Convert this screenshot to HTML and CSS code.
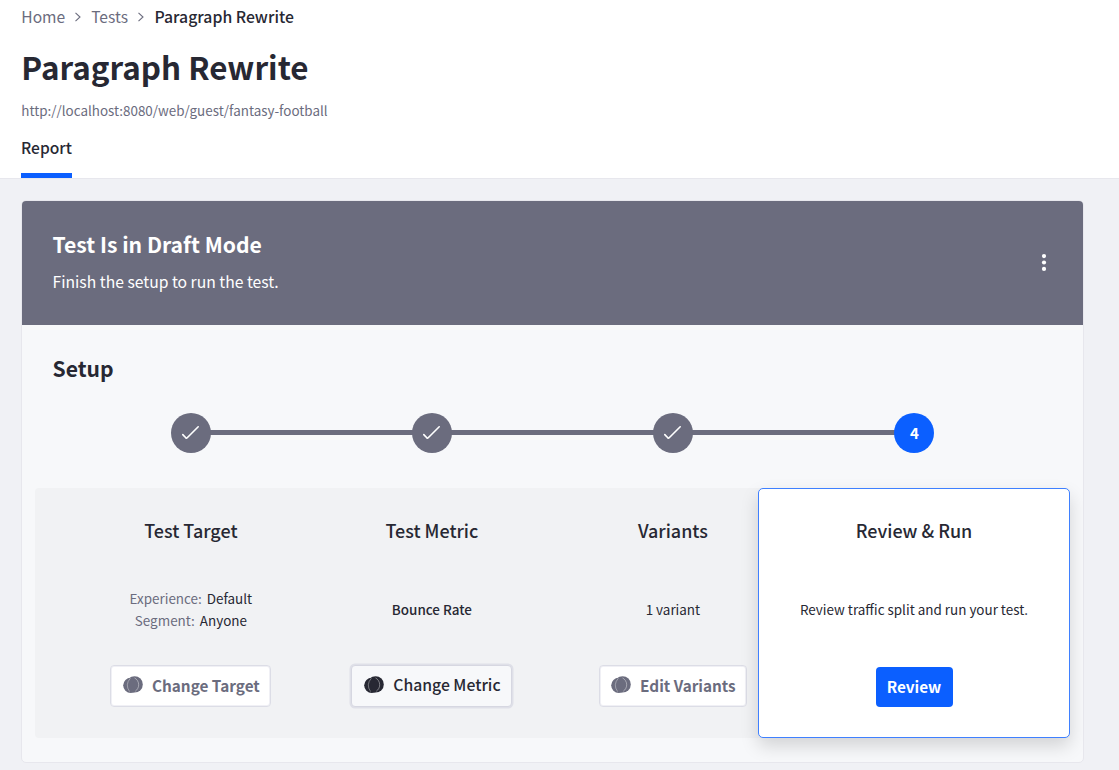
FILE: index.html
```html
<!DOCTYPE html>
<html lang="en">
<head>
<meta charset="utf-8">
<title>Paragraph Rewrite</title>
<link rel="stylesheet" href="styles.css">
</head>
<body>
<svg class="defs" width="0" height="0">
  <symbol id="check" viewBox="0 0 20 16"><path d="M1.8 9.6 4.8 12.8Q5.5 13.4 6.2 12.7L17.2 1.8" fill="none" stroke="#fff" stroke-width="1.6" stroke-linecap="round" stroke-linejoin="round"/></symbol>
  <symbol id="discs" viewBox="0 0 20 18">
    <circle cx="7.8" cy="9.3" r="7.6" fill="currentColor"/>
    <circle cx="11.6" cy="8.4" r="8.2" fill="currentColor"/>
    <path d="M7.4 2.2Q1.6 8.6 6.6 15.6" fill="none" stroke="#fff" stroke-opacity=".5" stroke-width=".7"/>
    <path d="M11.5 1.9A7.8 7.8 0 0 1 12.2 15.3" fill="none" stroke="#fff" stroke-opacity=".5" stroke-width=".8"/>
  </symbol>
  <symbol id="chevron" viewBox="0 0 8 12"><path d="M1.5 1.8 6 6 1.5 10.2" fill="none" stroke="#6b6c7e" stroke-width="1.1"/></symbol>
</svg>
<header class="header">
  <nav class="crumbs">
    <a class="crumb crumb-home">Home</a><svg class="chevron"><use href="#chevron"/></svg><a class="crumb crumb-tests">Tests</a><svg class="chevron"><use href="#chevron"/></svg><span class="crumb crumb-current">Paragraph Rewrite</span>
  </nav>
  <h1 class="title"><span>Paragraph Rewrite</span></h1>
  <p class="url"><span>http://localhost:8080/web/guest/fantasy-football</span></p>
  <div class="tabs"><a class="tab"><span>Report</span></a></div>
</header>
<main class="main">
  <section class="card">
    <div class="banner">
      <div>
        <h2 class="banner-title"><span>Test Is in Draft Mode</span></h2>
        <p class="banner-text"><span>Finish the setup to run the test.</span></p>
      </div>
      <svg class="dots" viewBox="0 0 6 18"><circle cx="3" cy="2.1" r="2.1"/><circle cx="3" cy="8.5" r="2.1"/><circle cx="3" cy="14.9" r="2.1"/></svg>
    </div>
    <h3 class="setup"><span>Setup</span></h3>
    <ol class="stepper">
      <li class="step"><span class="dot"><svg class="check"><use href="#check"/></svg></span></li>
      <li class="step"><span class="dot"><svg class="check"><use href="#check"/></svg></span></li>
      <li class="step"><span class="dot"><svg class="check"><use href="#check"/></svg></span></li>
      <li class="step"><span class="dot dot-active">4</span></li>
    </ol>
    <div class="panel">
      <article class="col">
        <h4 class="col-title"><span>Test Target</span></h4>
        <div class="col-body"><p class="pair"><span class="label">Experience:</span> <span>Default</span></p><p class="pair"><span class="label">Segment:</span> <span>Anyone</span></p></div>
        <button class="btn btn-target"><svg class="discs"><use href="#discs"/></svg><span>Change Target</span></button>
      </article>
      <article class="col">
        <h4 class="col-title"><span>Test Metric</span></h4>
        <div class="col-body"><p class="metric"><span>Bounce Rate</span></p></div>
        <button class="btn btn-metric"><svg class="discs"><use href="#discs"/></svg><span>Change Metric</span></button>
      </article>
      <article class="col">
        <h4 class="col-title"><span>Variants</span></h4>
        <div class="col-body"><p><span>1 variant</span></p></div>
        <button class="btn btn-variants"><svg class="discs"><use href="#discs"/></svg><span>Edit Variants</span></button>
      </article>
      <article class="col col-active">
        <h4 class="col-title"><span>Review &amp; Run</span></h4>
        <div class="col-body"><p><span>Review traffic split and run your test.</span></p></div>
        <button class="btn btn-primary"><span>Review</span></button>
      </article>
    </div>
  </section>
</main>
</body>
</html>
```
FILE: styles.css
```css
* { box-sizing: border-box; margin: 0; padding: 0; }
body {
  height: 770px;
  overflow: hidden;
  background: #f0f1f5;
  color: #272833;
  font-family: "Noto Sans CJK SC", "Noto Sans", sans-serif;
}
.defs { position: absolute; }
.header { height: 179px; padding-left: 21.3px; background: #fff; border-bottom: 1px solid #e7e7ed; }
.crumbs { display: flex; align-items: center; height: 32px; font-size: 15.6px; line-height: 32px; }
.crumb { color: #6b6c7e; }
.crumb-current { padding: 2px 0 0 0.5px; color: #272833; font-weight: 500; font-size: 15.8px; }
.chevron { width: 8px; height: 12px; margin: 1px 9px 0; }
.title { margin-top: 11px; font-size: 31.4px; line-height: 48px; font-weight: 700; }
.url { margin-top: 7px; font-size: 13.42px; line-height: 24px; color: #6b6c7e; }
.tabs { display: flex; margin: 7px 0 0 -0.3px; }
.tab { width: 51px; height: 49px; border-bottom: 5px solid #0b5fff; font-size: 15.6px; line-height: 36px; font-weight: 500; white-space: nowrap; }
.main { padding: 21px 35px 0 21px; }
.card { height: 563px; border: 1px solid #e7e7ed; border-radius: 5px; background: #f7f8fa; overflow: hidden; }
.banner { display: flex; justify-content: space-between; align-items: center; height: 124px; padding: 0 36px 1px 30.5px; background: #6b6c7e; color: #fff; }
.banner-title { font-size: 21.15px; line-height: 33px; font-weight: 700; }
.banner-text { margin-top: 5px; font-size: 15.7px; line-height: 34px; }
.dots { width: 6px; height: 18px; fill: #fff; }
.setup { margin: 25px 0 0 30.5px; font-size: 21.1px; line-height: 36px; font-weight: 700; }
.stepper { display: flex; margin: 27px 48px 0 48px; list-style: none; }
.step { display: flex; justify-content: center; align-items: center; flex: 1; height: 40px; background: linear-gradient(#6b6c7e, #6b6c7e) 0 17px / 100% 5px no-repeat; }
.step:first-child { background-position: 121px 17px; }
.step:last-child { background-size: 50% 5px; }
.dot { display: flex; justify-content: center; align-items: center; width: 40px; height: 40px; border-radius: 50%; background: #6b6c7e; color: #fff; }
.dot-active { background: #0b5fff; font-size: 15px; line-height: 40px; font-weight: 700; }
.check { width: 20px; height: 16px; }
.panel { display: flex; height: 250px; margin: 35px 13px 0; padding: 0 35px 0 35.4px; background: #f1f2f4; border-radius: 4px; }
.col { display: flex; flex-direction: column; align-items: center; flex: 0 0 241px; height: 250px; padding-top: 25px; }
.col-active { flex-basis: 312px; margin-left: -35.4px; background: #fff; border: 1px solid #3f80ff; border-radius: 5px; box-shadow: 0 8px 18px rgba(0,0,0,.15); padding-top: 24px; }
.col-title { font-size: 17.95px; line-height: 34px; font-weight: 500; }
.col-body { display: flex; flex-direction: column; justify-content: center; height: 66px; margin-top: 29px; font-size: 13.45px; line-height: 22px; text-align: center; white-space: nowrap; }
.pair { word-spacing: 2px; }
.label { color: #6b6c7e; }
.metric { font-weight: 500; }
.btn { display: flex; align-items: center; justify-content: center; gap: 9px; height: 42px; margin-top: 23px; padding: 0 0 2px 1px; border: 1px solid #dcdde6; border-radius: 4px; background: #fff; box-shadow: inset 0 0 0 1px #f0f0f5; color: #6b6c7e; font-family: inherit; font-size: 15.3px; line-height: 36px; font-weight: 700; white-space: nowrap; }
.btn-target { width: 161px; }
.btn-metric { width: 161px; border-color: #d6d7e1; background: #f7f8fa; color: #272833; box-shadow: 0 0 0 1.5px #dfe0e8; font-size: 15.75px; font-weight: 500; }
.btn-variants { width: 148px; }
.btn-primary { width: 77px; height: 40px; padding: 0 0 1px; border: 0; background: #0b5fff; box-shadow: none; color: #fff; margin-top: 24.5px; }
.discs { width: 20px; height: 18px; }
```
